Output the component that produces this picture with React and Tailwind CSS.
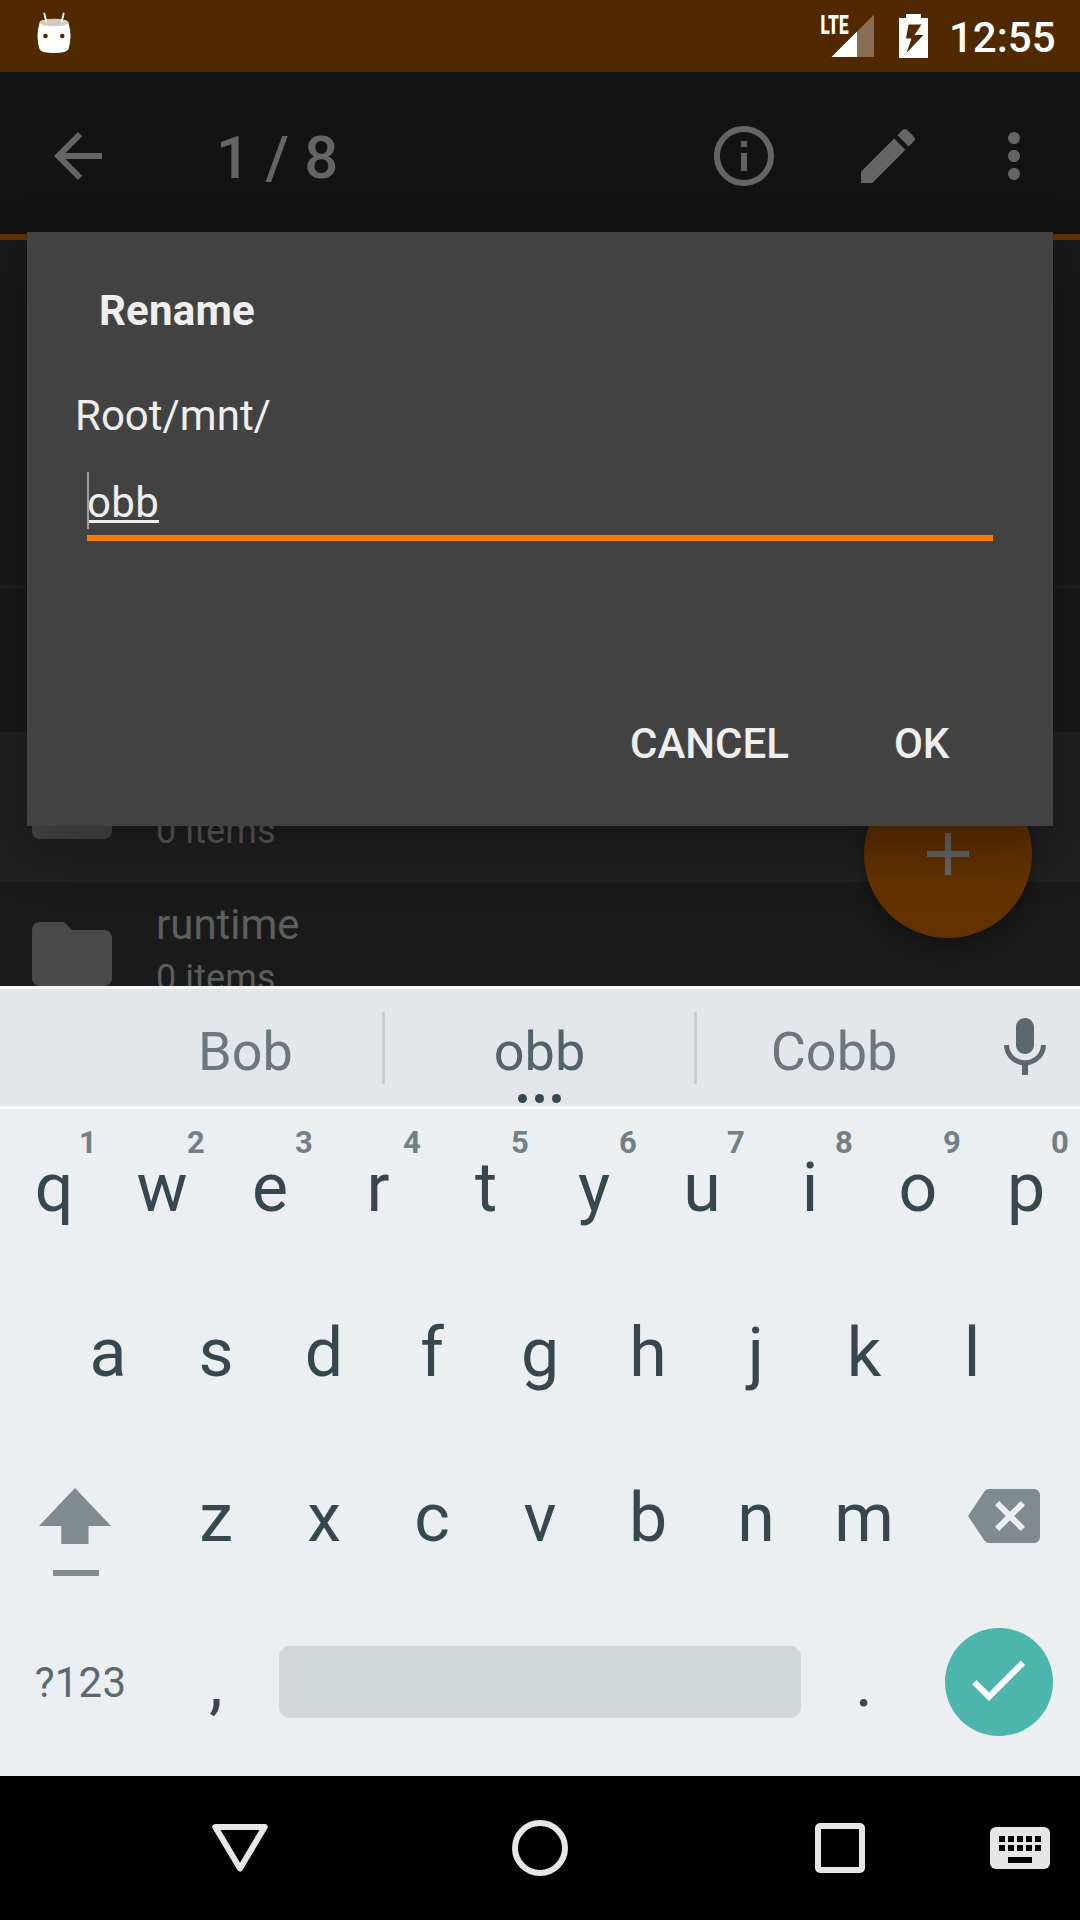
const Icon = ({ d, className }) => (
  <svg viewBox="0 0 24 24" className={className} fill="currentColor">
    <path d={d} />
  </svg>
);

const PATHS = {
  back: "M20 11H7.83l5.59-5.59L12 4l-8 8 8 8 1.41-1.41L7.83 13H20v-2z",
  info: "M11 17h2v-6h-2v6zm1-15C6.48 2 2 6.48 2 12s4.48 10 10 10 10-4.48 10-10S17.52 2 12 2zm0 18c-4.41 0-8-3.59-8-8s3.59-8 8-8 8 3.59 8 8-3.59 8-8 8zM11 9h2V7h-2v2z",
  edit: "M3 17.25V21h3.75L17.81 9.94l-3.75-3.75L3 17.25zM20.71 7.04c.39-.39.39-1.02 0-1.41l-2.34-2.34c-.39-.39-1.02-.39-1.41 0l-1.83 1.83 3.75 3.75 1.83-1.83z",
  more: "M12 8c1.1 0 2-.9 2-2s-.9-2-2-2-2 .9-2 2 .9 2 2 2zm0 2c-1.1 0-2 .9-2 2s.9 2 2 2 2-.9 2-2-.9-2-2-2zm0 6c-1.1 0-2 .9-2 2s.9 2 2 2 2-.9 2-2-.9-2-2-2z",
  folder: "M10 4H4c-1.1 0-1.99.9-1.99 2L2 18c0 1.1.9 2 2 2h16c1.1 0 2-.9 2-2V8c0-1.1-.9-2-2-2h-8l-2-2z",
  add: "M19 13h-6v6h-2v-6H5v-2h6V5h2v6h6v2z",
  mic: "M12 14c1.66 0 2.99-1.34 2.99-3L15 5c0-1.66-1.34-3-3-3S9 3.34 9 5v6c0 1.66 1.34 3 3 3zm5.3-3c0 3-2.54 5.1-5.3 5.1S6.7 14 6.7 11H5c0 3.41 2.72 6.23 6 6.72V21h2v-3.28c3.28-.48 6-3.3 6-6.72h-1.7z",
  backspace:
    "M22 3H7c-.69 0-1.23.35-1.59.88L0 12l5.41 8.11c.36.53.9.89 1.59.89h15c1.1 0 2-.9 2-2V5c0-1.1-.9-2-2-2zm-3 12.59L17.59 17 14 13.41 10.41 17 9 15.59 12.59 12 9 8.41 10.41 7 14 10.59 17.59 7 19 8.41 15.41 12 19 15.59z",
  check: "M9 16.17L4.83 12l-1.42 1.41L9 19 21 7l-1.41-1.41z",
};

function StatusBar() {
  return (
    <header className="flex h-[72px] bg-[#502900] pl-[37px] pr-6 text-white">
      <svg className="mt-3 h-[42px] w-[34px]" viewBox="0 0 34 42">
        <path d="M2.500 11Q-1.500 24 2.500 37Q4 41 17 41T31.500 37Q35.500 24 31.500 11Z" fill="#fff" />
        <ellipse cx="17" cy="10.500" rx="14.600" ry="3.800" fill="#d3c9c0" />
        <path d="M7.300 1.500l2 8M26.700 1.500l-2 8" stroke="#fff" strokeWidth="1.800" strokeLinecap="round" />
        <circle cx="8.500" cy="24" r="2.300" fill="#502900" />
        <circle cx="25.300" cy="24" r="2.300" fill="#502900" />
      </svg>
      <svg className="ml-auto mt-[14px] h-11 w-[56px] overflow-visible" viewBox="0 0 56 44">
        <path d="M53 .5V43H36V17.500Z" fill="#fff" fillOpacity=".32" />
        <path d="M36 17.500V43H10.500Z" fill="#fff" />
        <text x="-0.500" y="19.500" fontFamily="Roboto" fontWeight="900" fontSize="26" textLength="28" lengthAdjust="spacingAndGlyphs" fill="#fff">LTE</text>
      </svg>
      <svg className="ml-[22px] mt-[14px] h-11 w-[29px]" viewBox="0 0 29 44">
        <path fillRule="evenodd" fill="#fff" d="M0 4H7V0H22V4H29V44H0ZM9.500 10.500L7 24.500H12.500L7.500 39L24.500 21H15.500L22.500 10.500Z" />
      </svg>
      <div className="ml-[21px] mt-[13px] w-[107px] text-[42px] leading-[50px] font-medium">12:55</div>
    </header>
  );
}

function Toolbar() {
  return (
    <div className="flex h-[168px] items-start border-b-6 border-[#633200] bg-[#131313] pl-[42px] pr-[30px] pt-12 text-[#656565]">
      <Icon d={PATHS.back} className="size-[72px]" />
      <div className="ml-[102px] text-[60px] leading-[76px] font-medium tracking-[0.2px]">1 / 8</div>
      <Icon d={PATHS.info} className="ml-auto size-[72px]" />
      <Icon d={PATHS.edit} className="ml-[72px] size-[72px]" />
      <Icon d={PATHS.more} className="ml-[54px] size-[72px]" />
    </div>
  );
}

function FileRow({ name, className }) {
  return (
    <div className={"flex shrink-0 pl-6 text-[#5e5e5e] " + className}>
      <Icon d={PATHS.folder} className="mt-6 size-24 text-[#4a4a4a]" />
      <div className="ml-9 pt-[18px]">
        <div className="h-[57px] text-[42px] leading-[50px]">{name}</div>
        <div className="text-[36px] leading-[42px] tracking-[0.1px]">0 items</div>
      </div>
    </div>
  );
}

function RenameDialog() {
  return (
    <section className="absolute left-[27px] top-[232px] flex h-[594px] w-[1026px] flex-col bg-[#424242] text-[#eeeeee] shadow-[0_20px_50px_rgba(0,0,0,0.35)]">
      <h1 className="ml-[72px] mt-[54px] text-[42px] leading-[50px] font-bold tracking-[0.2px]">Rename</h1>
      <div className="ml-12 mt-[55px] text-[42px] leading-[50px]">Root/mnt/</div>
      <div className="ml-[60px] mt-[31px] flex h-[69px] w-[906px] border-b-6 border-[#f57c00]">
        <div className="relative h-[51px] w-[72px] border-b-3 border-[#eeeeee] pt-[6px] text-[42px] leading-[50px] tracking-[0.3px]">
          obb
          <span className="absolute left-0 top-0 h-[57px] w-0.5 bg-[#a0a0a0]" />
        </div>
      </div>
      <div className="mt-[178px] flex text-[42px] leading-[50px] font-medium">
        <button className="ml-[603px]">CANCEL</button>
        <button className="ml-[105px]">OK</button>
      </div>
    </section>
  );
}

function Suggestions() {
  return (
    <div className="flex h-[123px] items-center border-y-3 border-[#f5f7f8] bg-[#e3e7ea] text-[54px] leading-16 text-[#6b777d]">
      <div className="ml-[109px] w-[273px] text-center">
        <span className="relative top-1">Bob</span>
      </div>
      <div className="h-[72px] w-[3px] bg-[#cacfd2]" />
      <div className="relative w-[309px] text-center text-[#53636a]">
        <span className="relative top-1">obb</span>
        <span className="absolute left-[133px] top-[78px] flex gap-2">
          <i className="size-[9px] rounded-full bg-[#37474f]" />
          <i className="size-[9px] rounded-full bg-[#37474f]" />
          <i className="size-[9px] rounded-full bg-[#37474f]" />
        </span>
      </div>
      <div className="h-[72px] w-[3px] bg-[#cacfd2]" />
      <div className="w-[274px] text-center">
        <span className="relative top-1">Cobb</span>
      </div>
      <Icon d={PATHS.mic} className="ml-[18px] size-[72px] text-[#5b686e]" />
    </div>
  );
}

function Key({ char, hint }) {
  return (
    <div className="relative w-[108px] text-center text-[68px] leading-20">
      {char}
      {hint && (
        <span className="absolute -top-[23px] left-[58px] w-[60px] text-[31px] leading-9 font-bold text-[#727f85]">{hint}</span>
      )}
    </div>
  );
}

function Keyboard() {
  return (
    <div className="h-[667px] bg-[#ebeff2] text-[#37474f]">
      <div className="flex h-[165px] pt-[39px]">
        {"qwertyuiop".split("").map((c, i) => (
          <Key key={c} char={c} hint={String((i + 1) % 10)} />
        ))}
      </div>
      <div className="flex h-[165px] pl-[54px] pt-[39px]">
        {"asdfghjkl".split("").map((c) => (
          <Key key={c} char={c} />
        ))}
      </div>
      <div className="flex h-[165px] pt-[39px]">
        <svg className="ml-[39px] mr-[51px] mt-[10px] h-[88px] w-[72px]" viewBox="0 0 72 88" fill="#808b90">
          <path d="M36 0L72 38H49.500V56H22.300V38H0Z" />
          <path d="M14 82H60V88H14Z" />
        </svg>
        {"zxcvbnm".split("").map((c) => (
          <Key key={c} char={c} />
        ))}
        <Icon d={PATHS.backspace} className="ml-[50px] mt-0.5 size-[72px] text-[#808b90]" />
      </div>
      <div className="flex h-[172px] pt-[24px]">
        <div className="w-[161px] pt-[30px] text-center text-[42px] leading-[50px] tracking-[0.2px] text-[#5b6a70]">?123</div>
        <div className="ml-px pt-[15px]">
          <Key char="," />
        </div>
        <div className="ml-[9px] mt-[18px] h-[72px] w-[522px] rounded-[11px] bg-[#d1d6d9]" />
        <div className="ml-[9px] pt-[15px]">
          <Key char="." />
        </div>
        <div className="ml-[27px] flex size-[108px] items-center justify-center rounded-full bg-[#4db6ac] text-white">
          <Icon d={PATHS.check} className="mb-1 mr-0.5 size-[72px]" />
        </div>
      </div>
    </div>
  );
}

function NavBar() {
  return (
    <nav className="flex h-36 items-center bg-black pl-[212px]">
      <svg className="h-14 w-14" viewBox="0 0 56 56" fill="none" stroke="#e6e6e6" strokeWidth="6" strokeLinejoin="round">
        <path d="M3.300 7H52.700L28 48.500Z" />
      </svg>
      <svg className="ml-[244px] h-14 w-14" viewBox="0 0 56 56" fill="none" stroke="#e6e6e6" strokeWidth="6">
        <circle cx="28" cy="28" r="25" />
      </svg>
      <div className="ml-[247px] size-[50px] rounded-[5px] border-6 border-[#e6e6e6]" />
      <svg className="ml-[125px] h-[42px] w-[60px]" viewBox="0 0 60 42">
        <rect width="60" height="42" rx="6" fill="#e6e6e6" />
        {[9, 18, 27, 36, 45].map((x) => (
          <path key={x} d={`M${x} 9h6v6h-6zM${x} 18h6v6h-6z`} fill="#000" />
        ))}
        <rect x="18" y="30" width="24" height="6" fill="#000" />
      </svg>
    </nav>
  );
}

export default function App() {
  return (
    <main className="relative h-[1920px] w-[1080px] overflow-hidden bg-[#1a1a1a] font-['Roboto',sans-serif]">
      <StatusBar />
      <Toolbar />
      <div className="flex h-[746px] flex-col overflow-hidden">
        <div className="h-[348px] shrink-0 border-b-3 border-[#202020]" />
        <div className="h-[144px] shrink-0" />
        <FileRow name="obb" className="h-[150px] bg-[#212121] pt-[3px]" />
        <FileRow name="runtime" className="h-[147px]" />
      </div>
      <div className="absolute left-[864px] top-[770px] flex size-[168px] items-center justify-center rounded-full bg-[#633200] text-[#656565] shadow-[0_6px_18px_rgba(0,0,0,0.3)]">
        <Icon d={PATHS.add} className="size-[72px]" />
      </div>
      <RenameDialog />
      <div className="relative">
        <Suggestions />
        <Keyboard />
      </div>
      <NavBar />
    </main>
  );
}
